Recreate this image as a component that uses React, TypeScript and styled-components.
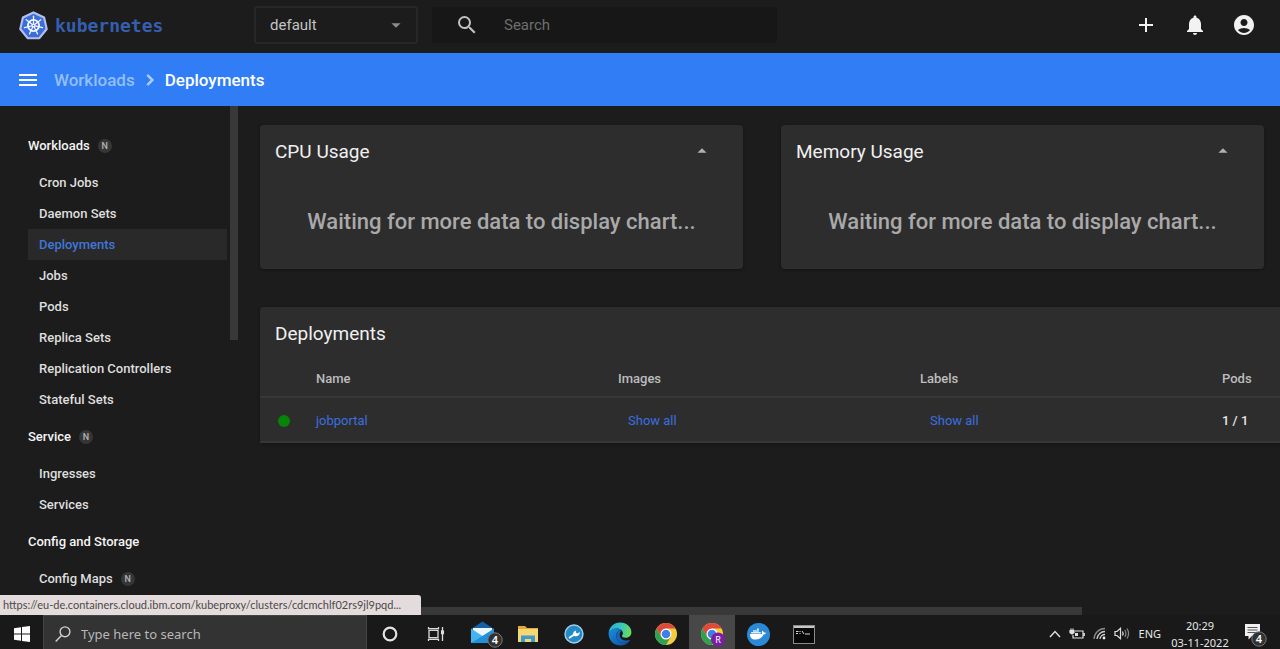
import React from "react";
import styled, { createGlobalStyle } from "styled-components";
import {
  MdAccountCircle,
  MdAdd,
  MdArrowDropDown,
  MdArrowDropUp,
  MdChevronRight,
  MdMenu,
  MdNotifications,
  MdSearch,
} from "react-icons/md";
import { FaDocker } from "react-icons/fa";

const color = {
  page: "#1c1c1c",
  card: "#2d2d2d",
  line: "#373737",
  blue: "#307df5",
  link: "#3a6fe0",
  text: "#e6e6e6",
  muted: "#a9a9a9",
};

const GlobalStyle = createGlobalStyle`
  * { box-sizing: border-box; }
  body {
    margin: 0;
    background: ${color.page};
    color: ${color.text};
    font-family: Roboto, "Liberation Sans", sans-serif;
    font-size: 13px;
  }
  button, input, select { font-family: inherit; }
  a { color: inherit; text-decoration: none; }
`;

const Page = styled.div`
  display: flex;
  flex-direction: column;
  height: 100vh;
  overflow: hidden;
`;

const TopBar = styled.header`
  display: flex;
  align-items: center;
  flex: none;
  height: 53px;
  padding: 0 24px 3px 18px;
`;

const Brand = styled.a`
  display: flex;
  align-items: center;
  gap: 6px;
  width: 236px;
  color: #355fae;
  font-family: "DejaVu Sans Mono", monospace;
  font-size: 18px;
  font-weight: 700;
`;

const SelectBox = styled.div`
  position: relative;
  display: flex;
  align-items: center;
  width: 164px;
  height: 38px;
  border: 2px solid #272727;
  border-radius: 3px;
  color: #8c8c8c;

  svg {
    position: absolute;
    right: 9px;
    pointer-events: none;
  }
`;

const NamespaceSelect = styled.select`
  appearance: none;
  width: 100%;
  height: 100%;
  padding: 0 14px;
  border: 0;
  background: transparent;
  color: #c4c4c4;
  font-size: 15px;
`;

const SearchBox = styled.label`
  display: flex;
  align-items: center;
  flex: 0 1 345px;
  gap: 25px;
  height: 36px;
  margin-left: 14px;
  padding-left: 23px;
  border-radius: 3px;
  background: #171717;
  color: #c2c2c2;
`;

const SearchInput = styled.input`
  flex: 1;
  min-width: 0;
  padding: 0;
  border: 0;
  background: transparent;
  color: ${color.text};
  font-size: 15px;
  &::placeholder { color: #6e6e6e; opacity: 1; }
`;

const IconButton = styled.button`
  display: flex;
  align-items: center;
  justify-content: center;
  padding: 0;
  border: 0;
  background: transparent;
  color: inherit;
`;

const Actions = styled.div`
  display: flex;
  gap: 25px;
  margin-left: auto;
  color: #f2f2f2;
`;

const Breadcrumbs = styled.nav`
  display: flex;
  align-items: center;
  flex: none;
  height: 53px;
  padding: 0 16px;
  background: ${color.blue};
  color: #ffffff;
  font-size: 17px;
  font-weight: 500;
`;

const Crumb = styled.a<{ $parent?: boolean }>`
  color: ${(p) => (p.$parent ? "#93bffb" : "#ffffff")};
  margin-left: ${(p) => (p.$parent ? "14px" : "0")};
`;

const CrumbSeparator = styled.span`
  display: flex;
  justify-content: center;
  width: 30px;
  color: #a9ccfc;

  path:not([fill="none"]) {
    stroke: currentColor;
    stroke-width: 1;
  }
`;

const Body = styled.div`
  display: flex;
  flex: 1;
  min-height: 0;
`;

const Sidebar = styled.aside`
  display: flex;
  flex: none;
  width: 238px;
  overflow: hidden;
`;

const SideNav = styled.nav`
  flex: 1;
  padding: 18px 3px 0 28px;
  font-weight: 500;
`;

const SideScroll = styled.div`
  width: 8px;
  height: 46%;
  background: #383838;
`;

const GroupTitle = styled.h2`
  display: flex;
  align-items: center;
  gap: 8px;
  height: 43px;
  margin: 0;
  color: #f4f4f4;
  font-size: 13px;
  font-weight: 500;
`;

const SideLink = styled.a<{ $active?: boolean }>`
  display: flex;
  align-items: center;
  gap: 8px;
  height: 31px;
  padding-left: 11px;
  background: ${(p) => (p.$active ? "#292929" : "transparent")};
  color: ${(p) => (p.$active ? "#3f76d8" : "#dedede")};
`;

const NamespacedBadge = styled.span`
  width: 14px;
  height: 14px;
  border-radius: 50%;
  background: #363636;
  color: #b4b4b4;
  font-size: 9px;
  line-height: 14px;
  text-align: center;
`;

const Main = styled.main`
  display: flex;
  flex-direction: column;
  flex: 1;
  min-width: 0;
`;

const Content = styled.div`
  flex: 1;
  min-height: 0;
  padding: 19px 16px 0 22px;
  overflow: hidden;
`;

const Charts = styled.div`
  display: grid;
  grid-template-columns: 1fr 1fr;
  gap: 38px;
  margin-bottom: 38px;
`;

const Card = styled.section`
  border-radius: 4px;
  background: ${color.card};
  box-shadow: 0 1px 3px rgba(0, 0, 0, 0.35);
`;

const WideCard = styled(Card)`
  width: max-content;
`;

const CardHeader = styled.div`
  display: flex;
  align-items: center;
  justify-content: space-between;
  height: 52px;
  padding: 0 30px 0 15px;
  color: #b0b0b0;
`;

const CardTitle = styled.h3`
  margin: 0;
  color: #f0f0f0;
  font-size: 19px;
  font-weight: 400;
`;

const ChartMessage = styled.p`
  margin: 0;
  padding: 27px 16px 29px;
  color: ${color.muted};
  font-size: 22px;
  font-weight: 500;
  line-height: 36px;
  text-align: center;
  white-space: nowrap;
`;

const Table = styled.table`
  border-collapse: separate;
  border-spacing: 0;
  table-layout: fixed;
`;

const HeadCell = styled.th<{ $narrow?: boolean }>`
  width: ${(p) => (p.$narrow ? "56px" : "302px")};
  height: 39px;
  padding: 2px 0 0;
  border-bottom: 2px solid ${color.line};
  color: #bdbdbd;
  font-weight: 500;
  text-align: left;
`;

const Cell = styled.td`
  height: 45px;
  padding: 2px 0 0;
  border-bottom: 2px solid ${color.line};
  color: ${color.text};
`;

const PodCell = styled(Cell)`
  font-weight: 500;
`;

const RowLink = styled.a`
  color: ${color.link};
`;

const ShowAll = styled.button`
  padding: 0 10px;
  border: 0;
  background: transparent;
  color: ${color.link};
  font-size: 13px;
`;

const StatusDot = styled.span`
  display: block;
  width: 12px;
  height: 12px;
  margin-left: 18px;
  border-radius: 50%;
  background: #078407;
`;

const MainScroll = styled.div`
  flex: none;
  width: 81%;
  height: 8px;
  background: #383838;
`;

const StatusBubble = styled.div`
  position: absolute;
  left: 0;
  bottom: 34px;
  height: 20px;
  padding: 0 20px 0 3px;
  border-radius: 0 3px 0 0;
  background: #e4dcdc;
  color: #4c4848;
  font-family: Lato, "Noto Sans", sans-serif;
  font-size: 11px;
  line-height: 20px;
`;

const Taskbar = styled.footer`
  display: flex;
  flex: none;
  height: 34px;
  background: #191919;
  color: #e8e8e8;
  font-family: "Noto Sans", sans-serif;
`;

const TaskSearch = styled.label`
  display: flex;
  align-items: center;
  gap: 10px;
  width: 324px;
  height: 36px;
  padding: 0 11px;
  background: #333333;
  border: 1px solid #444444;
  border-bottom: 0;
`;

const TaskInput = styled.input`
  flex: 1;
  min-width: 0;
  padding: 0;
  border: 0;
  background: transparent;
  color: #d0d0d0;
  font-size: 13px;
  &::placeholder { color: #b8b8b8; opacity: 1; }
`;

const TaskButton = styled(IconButton)<{ $active?: boolean }>`
  flex: none;
  width: 46px;
  height: 38px;
  background: ${(p) => (p.$active ? "#484848" : "transparent")};
`;

const StartButton = styled(TaskButton)`
  width: 43px;
`;

const Tray = styled.div`
  display: flex;
  align-items: center;
  height: 37px;
  margin-left: auto;
  font-size: 11px;
`;

const TrayIcons = styled.div`
  display: flex;
  align-items: center;
  gap: 8px;
  margin-right: 9px;
`;

const Clock = styled.time`
  width: 78px;
  font-size: 11px;
  line-height: 17px;
  text-align: center;
`;

const NoticeButton = styled(IconButton)`
  width: 34px;
  margin-right: 7px;
`;

function spoke(i: number, r: number, cx = 16, cy = 16) {
  const a = ((-90 + (i * 360) / 7) * Math.PI) / 180;
  return [cx + r * Math.cos(a), cy + r * Math.sin(a)];
}

const KubernetesLogo = () => {
  const hull = [0, 1, 2, 3, 4, 5, 6].map((i) => spoke(i, 14, 16, 16.5).join(",")).join(" ");
  return (
    <svg width="31" height="31" viewBox="0 0 32 32" aria-hidden="true">
      <polygon points={hull} fill="#3a6cdc" stroke="#b4c1ec" strokeWidth="2.2" strokeLinejoin="round" />
      <g stroke="#f4f7ff" fill="none">
        <circle cx="16" cy="16" r="5.8" strokeWidth="1.9" />
        {[0, 1, 2, 3, 4, 5, 6].map((i) => {
          const [x1, y1] = spoke(i, 1.5);
          const [x2, y2] = spoke(i, 9.6);
          return <line key={i} x1={x1} y1={y1} x2={x2} y2={y2} strokeWidth="1.3" strokeLinecap="round" />;
        })}
      </g>
      <circle cx="16" cy="16" r="2" fill="#f4f7ff" />
      <circle cx="16" cy="16" r="0.8" fill="#3a6cdc" />
    </svg>
  );
};

const WindowsIcon = () => (
  <svg width="16" height="16" viewBox="0 0 16 16" fill="#ffffff" aria-hidden="true">
    <path d="M0 2.3 7 1.3V7.5H0zM8 1.1 16 0V7.5H8zM0 8.5H7V14.7L0 13.7zM8 8.5H16V16L8 14.9z" />
  </svg>
);

const TaskSearchIcon = () => (
  <svg width="16" height="16" viewBox="0 0 16 16" fill="none" stroke="#d0d0d0" strokeWidth="1.4" aria-hidden="true">
    <circle cx="10" cy="5.8" r="4.9" />
    <path d="M6.5 9.4 0.7 15.4" />
  </svg>
);

const CortanaIcon = () => (
  <svg width="18" height="18" viewBox="0 0 18 18" fill="none" aria-hidden="true">
    <circle cx="9" cy="9" r="6.3" stroke="#e4e4e4" strokeWidth="2.2" />
  </svg>
);

const TaskViewIcon = () => (
  <svg width="18" height="16" viewBox="0 0 18 16" fill="none" stroke="#dcdcdc" strokeWidth="1.3" aria-hidden="true">
    <rect x="2" y="4.3" width="9" height="7.4" />
    <path d="M1.5 1v1.6h10V1M1.5 15v-1.6h10V15M15.5 1v14" />
    <rect x="14.6" y="5" width="1.8" height="2.6" fill="#dcdcdc" />
  </svg>
);

const CountBadge = ({ cx, cy }: { cx: number; cy: number }) => (
  <g>
    <circle cx={cx} cy={cy} r="7.2" fill="#303336" stroke="#777777" strokeWidth="1" />
    <text x={cx} y={cy + 4} textAnchor="middle" fontSize="11" fontWeight="600" fill="#ffffff">
      4
    </text>
  </g>
);

const MailIcon = () => (
  <svg width="46" height="28" viewBox="-8 0 46 28" aria-hidden="true">
    <path d="M4 9 15.5 1.5 27 9v13H4z" fill="#1560a8" />
    <path d="M6 8h19v9H6z" fill="#eef7fd" />
    <path d="M4 8.5 15.5 16 27 8.500V23H4z" fill="#45b4ee" />
    <path d="M4 23 27 9v14z" fill="#2390dc" />
    <CountBadge cx={28} cy={20} />
  </svg>
);

const FolderIcon = () => (
  <svg width="22" height="20" viewBox="0 0 22 20" aria-hidden="true">
    <path d="M1 2h7l2 2h11v14H1z" fill="#e0aa38" />
    <path d="M1 5h20v13H1z" fill="#f7d675" />
    <path d="M4 18v-6.5h14V18h-4v-3H8v3z" fill="#3f9bc9" />
  </svg>
);

const ToolIcon = () => (
  <svg width="20" height="20" viewBox="0 0 20 20" aria-hidden="true">
    <circle cx="10" cy="10" r="9" fill="#2389c8" stroke="#a5cfe6" strokeWidth="1.4" />
    <path
      d="M4.500 13.200 9 10.200C9 8.500 10.200 6.800 12.200 6.500l-.4 2 1.400 1.100 2.600-1.600c.2 2.500-1.600 4.500-4 4.300-.7 0-1.300-.3-1.700-.6L5.500 14.800z"
      fill="#ffffff"
    />
  </svg>
);

const EdgeIcon = () => (
  <svg width="24" height="24" viewBox="0 0 24 24" aria-hidden="true">
    <defs>
      <linearGradient id="edgeTop" x1="0" y1="0.3" x2="1" y2="0.5">
        <stop offset="0" stopColor="#2aa9e0" />
        <stop offset="0.5" stopColor="#36c6c0" />
        <stop offset="1" stopColor="#6bdc5c" />
      </linearGradient>
      <linearGradient id="edgeSide" x1="0" y1="0" x2="1" y2="1">
        <stop offset="0" stopColor="#1b8fdc" />
        <stop offset="1" stopColor="#0c4ea0" />
      </linearGradient>
    </defs>
    <path
      d="M.6 11C1.200 4.900 6 .6 12 .6c6.800 0 11.400 4.800 11.400 9.600 0 3.400-2.500 5.500-5.600 5.500-2.600 0-3.900-.9-3.900-1.700 0-.7 1-1 1-2.800 0-2.200-2.200-4.600-6-4.600C5.400 6.600 2 8.500.6 11z"
      fill="url(#edgeTop)"
    />
    <path
      d="M.6 11c1.400-2.800 4.600-4.500 8-4.500 2.400 0 4.200.9 5.200 2.200-2.600-.8-5.600 1.400-5.600 5 0 4.100 3.600 7.100 7.900 7.100 2 0 3.700-.5 5.100-1.400-2 2.600-5.200 4.100-9 4.100C5.700 23.500.2 18.200.6 11z"
      fill="url(#edgeSide)"
    />
    <path
      d="M8.200 13.700c0 4.100 3.600 7.100 7.900 7.100 2.300 0 4.500-.8 5.600-2 .4-.5 0-1-.5-.8-4.800 1.800-9.500-.9-9.500-5 0-1.800.9-3.300 2.100-4.300-2.600-.8-5.600 1.400-5.600 5z"
      fill="#1565b8"
    />
  </svg>
);

const ChromeIcon = ({ profile }: { profile?: boolean }) => (
  <svg width="26" height="26" viewBox="-1 -1 26 26" aria-hidden="true">
    <circle cx="12" cy="12" r="11" fill="#f7cb3b" />
    <path d="M2.470 6.500A11 11 0 0 1 21.530 6.500H12L7.240 14.750z" fill="#dc4a3d" />
    <path d="M2.470 6.500A11 11 0 0 0 12 23L16.760 14.750H7.240z" fill="#2fa151" />
    <circle cx="12" cy="12" r="5.500" fill="#ffffff" />
    <circle cx="12" cy="12" r="4.300" fill="#3f7fe8" />
    {profile && (
      <g>
        <circle cx="18" cy="17.500" r="7" fill="#7b1fa2" />
        <text x="18" y="21" textAnchor="middle" fontSize="9" fill="#ffffff">
          R
        </text>
      </g>
    )}
  </svg>
);

const DockerBadge = styled.span`
  display: flex;
  align-items: center;
  justify-content: center;
  width: 23px;
  height: 23px;
  border-radius: 50%;
  background: #2b8ad8;
  color: #ffffff;
`;

const TerminalIcon = () => (
  <svg width="22" height="19" viewBox="0 0 22 19" aria-hidden="true">
    <rect x="0.5" y="0.5" width="21" height="18" fill="#080808" stroke="#8a8a8a" />
    <path d="M1 2h20" stroke="#c8c8c8" strokeWidth="2" />
    <path d="M3 6.500h2.500M3 8.500h2M7 6v1M7 8v1M9 6l2 3M12 9h5" stroke="#d8d8d8" strokeWidth="1" />
  </svg>
);

const ChevronIcon = () => (
  <svg width="12" height="8" viewBox="0 0 12 8" fill="none" stroke="#dcdcdc" strokeWidth="1.500" aria-hidden="true">
    <path d="M1 7 6 1.500 11 7" />
  </svg>
);

const BatteryIcon = () => (
  <svg width="16" height="12" viewBox="0 0 16 12" fill="none" stroke="#e0e0e0" strokeWidth="1.200" aria-hidden="true">
    <path d="M6 3h8v7H4V7M15.300 5v3" />
    <path d="M1 2.500h4v2.200L3 6 1 4.700zM2 .5v2M4 .5v2" fill="#e0e0e0" />
    <path d="M6 5h3v3H6z" fill="#e0e0e0" stroke="none" />
  </svg>
);

const WifiIcon = () => (
  <svg width="13" height="13" viewBox="0 0 13 13" fill="none" strokeWidth="1.300" aria-hidden="true">
    <path d="M1 12A11 11 0 0 1 12 1.500" stroke="#8a8a8a" />
    <path d="M4 12A8 8 0 0 1 12 4.500M7 12A5 5 0 0 1 12 7.500" stroke="#cfcfcf" />
    <circle cx="11" cy="11" r="1.400" fill="#eeeeee" />
  </svg>
);

const SpeakerIcon = () => (
  <svg width="16" height="13" viewBox="0 0 16 13" fill="none" strokeWidth="1.200" aria-hidden="true">
    <path d="M1 4.500h2L6.500 1.300v10.400L3 8.500H1z" stroke="#e0e0e0" />
    <path d="M8.500 4.500q1.200 2 0 4" stroke="#e0e0e0" />
    <path d="M10.800 3q2.200 3.500 0 7M13 1.500q3.200 5 0 10" stroke="#8a8a8a" />
  </svg>
);

const NoticeIcon = () => (
  <svg width="26" height="28" viewBox="0 -3 26 28" aria-hidden="true">
    <path d="M2 1h15v12H9l-3.500 3.500V13H2z" fill="#f0f0f0" />
    <path d="M4.500 4.500h10M4.500 7h10M4.500 9.500h10" stroke="#555555" />
    <CountBadge cx={16} cy={16} />
  </svg>
);

const navGroups = [
  {
    title: "Workloads",
    namespaced: true,
    items: [
      { label: "Cron Jobs" },
      { label: "Daemon Sets" },
      { label: "Deployments", active: true },
      { label: "Jobs" },
      { label: "Pods" },
      { label: "Replica Sets" },
      { label: "Replication Controllers" },
      { label: "Stateful Sets" },
    ],
  },
  { title: "Service", namespaced: true, items: [{ label: "Ingresses" }, { label: "Services" }] },
  { title: "Config and Storage", items: [{ label: "Config Maps", namespaced: true }] },
] as {
  title: string;
  namespaced?: boolean;
  items: { label: string; active?: boolean; namespaced?: boolean }[];
}[];

const UsageCard = ({ title }: { title: string }) => (
  <Card>
    <CardHeader>
      <CardTitle>{title}</CardTitle>
      <IconButton aria-label={`Collapse ${title}`}>
        <MdArrowDropUp size={22} />
      </IconButton>
    </CardHeader>
    <ChartMessage>Waiting for more data to display chart...</ChartMessage>
  </Card>
);

export default function App() {
  return (
    <Page>
      <GlobalStyle />
      <TopBar>
        <Brand href="#">
          <KubernetesLogo />
          kubernetes
        </Brand>
        <SelectBox>
          <NamespaceSelect aria-label="Namespace" defaultValue="default">
            <option value="default">default</option>
          </NamespaceSelect>
          <MdArrowDropDown size={22} />
        </SelectBox>
        <SearchBox>
          <MdSearch size={24} />
          <SearchInput type="text" placeholder="Search" aria-label="Search" />
        </SearchBox>
        <Actions>
          <IconButton aria-label="Create">
            <MdAdd size={24} />
          </IconButton>
          <IconButton aria-label="Notifications">
            <MdNotifications size={24} />
          </IconButton>
          <IconButton aria-label="Account">
            <MdAccountCircle size={24} />
          </IconButton>
        </Actions>
      </TopBar>

      <Breadcrumbs aria-label="Breadcrumb">
        <IconButton aria-label="Toggle menu">
          <MdMenu size={24} />
        </IconButton>
        <Crumb href="#" $parent>
          Workloads
        </Crumb>
        <CrumbSeparator>
          <MdChevronRight size={22} />
        </CrumbSeparator>
        <Crumb href="#">Deployments</Crumb>
      </Breadcrumbs>

      <Body>
        <Sidebar>
          <SideNav aria-label="Resources">
            {navGroups.map((group) => (
              <div key={group.title}>
                <GroupTitle>
                  {group.title}
                  {group.namespaced && <NamespacedBadge>N</NamespacedBadge>}
                </GroupTitle>
                {group.items.map((item) => (
                  <SideLink key={item.label} href="#" $active={item.active}>
                    {item.label}
                    {item.namespaced && <NamespacedBadge>N</NamespacedBadge>}
                  </SideLink>
                ))}
              </div>
            ))}
          </SideNav>
          <SideScroll />
        </Sidebar>

        <Main>
          <Content>
            <Charts>
              <UsageCard title="CPU Usage" />
              <UsageCard title="Memory Usage" />
            </Charts>
            <WideCard>
              <CardHeader>
                <CardTitle>Deployments</CardTitle>
              </CardHeader>
              <Table>
                <thead>
                  <tr>
                    <HeadCell $narrow aria-label="Status" />
                    <HeadCell>Name</HeadCell>
                    <HeadCell>Images</HeadCell>
                    <HeadCell>Labels</HeadCell>
                    <HeadCell>Pods</HeadCell>
                  </tr>
                </thead>
                <tbody>
                  <tr>
                    <Cell>
                      <StatusDot />
                    </Cell>
                    <Cell>
                      <RowLink href="#">jobportal</RowLink>
                    </Cell>
                    <Cell>
                      <ShowAll>Show all</ShowAll>
                    </Cell>
                    <Cell>
                      <ShowAll>Show all</ShowAll>
                    </Cell>
                    <PodCell>1 / 1</PodCell>
                  </tr>
                </tbody>
              </Table>
            </WideCard>
          </Content>
          <MainScroll />
        </Main>
      </Body>

      <StatusBubble>https://eu-de.containers.cloud.ibm.com/kubeproxy/clusters/cdcmchlf02rs9jl9pqd...</StatusBubble>

      <Taskbar>
        <StartButton aria-label="Start">
          <WindowsIcon />
        </StartButton>
        <TaskSearch>
          <TaskSearchIcon />
          <TaskInput type="text" placeholder="Type here to search" aria-label="Type here to search" />
        </TaskSearch>
        <TaskButton aria-label="Cortana">
          <CortanaIcon />
        </TaskButton>
        <TaskButton aria-label="Task view">
          <TaskViewIcon />
        </TaskButton>
        <TaskButton aria-label="Mail">
          <MailIcon />
        </TaskButton>
        <TaskButton aria-label="File Explorer">
          <FolderIcon />
        </TaskButton>
        <TaskButton aria-label="Tools">
          <ToolIcon />
        </TaskButton>
        <TaskButton aria-label="Edge">
          <EdgeIcon />
        </TaskButton>
        <TaskButton aria-label="Chrome">
          <ChromeIcon />
        </TaskButton>
        <TaskButton aria-label="Chrome profile" $active>
          <ChromeIcon profile />
        </TaskButton>
        <TaskButton aria-label="Docker">
          <DockerBadge>
            <FaDocker size={16} />
          </DockerBadge>
        </TaskButton>
        <TaskButton aria-label="Command Prompt">
          <TerminalIcon />
        </TaskButton>
        <Tray>
          <TrayIcons>
            <ChevronIcon />
            <BatteryIcon />
            <WifiIcon />
            <SpeakerIcon />
          </TrayIcons>
          ENG
          <Clock>
            20:29
            <br />
            03-11-2022
          </Clock>
          <NoticeButton aria-label="Notification center">
            <NoticeIcon />
          </NoticeButton>
        </Tray>
      </Taskbar>
    </Page>
  );
}
